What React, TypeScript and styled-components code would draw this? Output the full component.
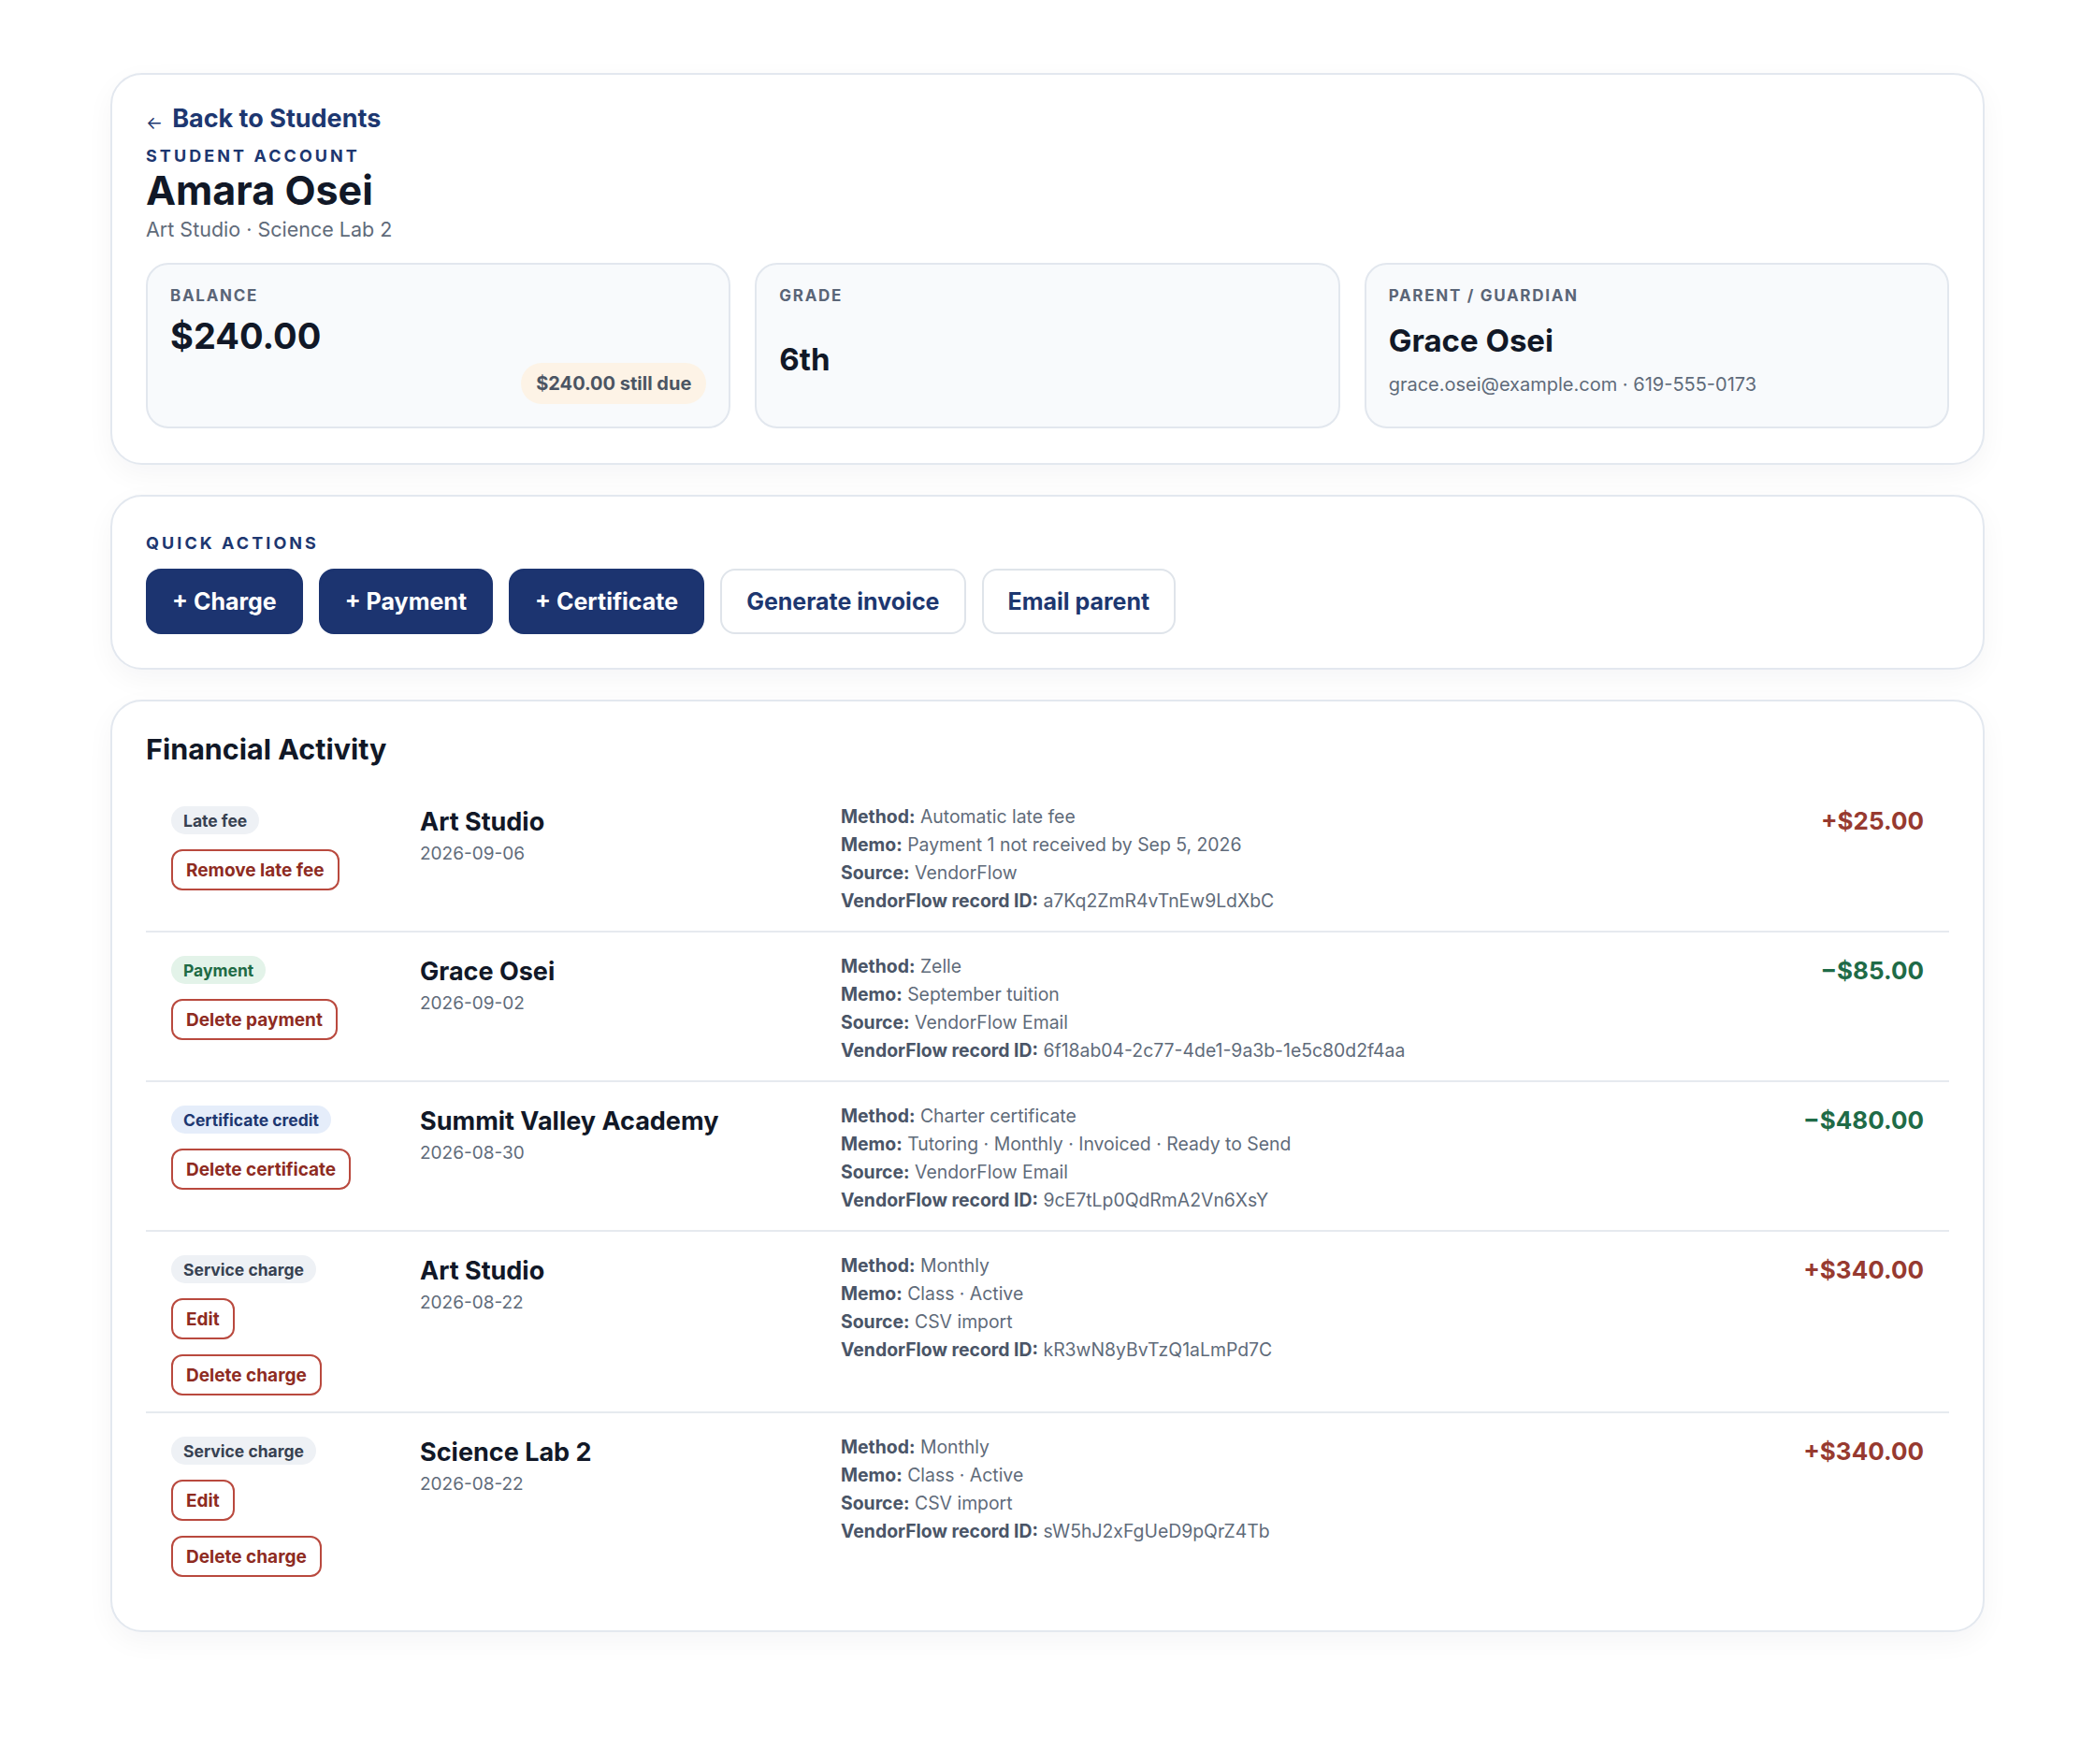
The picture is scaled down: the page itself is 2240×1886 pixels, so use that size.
import styled, { createGlobalStyle } from "styled-components"

const GlobalStyle = createGlobalStyle`
  * { box-sizing: border-box; }
  body {
    margin: 0;
    background: #ffffff;
    font-family: Inter, "Liberation Sans", Arial, sans-serif;
    color: #111827;
  }
`

const Page = styled.main`
  padding: 78px 118px 120px;
  display: flex;
  flex-direction: column;
  gap: 32px;
`

const Card = styled.section`
  background: #fff;
  border: 2px solid #e3e8ef;
  border-radius: 34px;
  padding: 30px 36px 37px;
  box-shadow: 0 10px 30px rgba(15, 23, 42, 0.045);
`

const BackLink = styled.a`
  display: flex;
  align-items: baseline;
  gap: 10px;
  color: #1d3770;
  font-size: 27px;
  font-weight: 700;
  line-height: 34px;
  text-decoration: none;
  cursor: pointer;

  span {
    font-size: 19px;
    font-weight: 400;
    position: relative;
    top: 2px;
  }
`

const Eyebrow = styled.div<{ $tone?: "navy" | "slate" }>`
  font-size: ${(p) => (p.$tone === "slate" ? "17px" : "18px")};
  line-height: 22px;
  font-weight: 700;
  letter-spacing: ${(p) => (p.$tone === "slate" ? "0.1em" : "0.17em")};
  text-transform: uppercase;
  color: ${(p) => (p.$tone === "slate" ? "#5a6577" : "#1d3770")};
`

const AccountLabel = styled(Eyebrow)`
  margin-top: 9px;
`

const StudentName = styled.h1`
  margin: 1px 0 0;
  font-size: 43px;
  line-height: 48px;
  font-weight: 700;
  color: #111827;
`

const Subtitle = styled.div`
  margin-top: 4px;
  font-size: 21.5px;
  line-height: 28px;
  color: #5f6b7a;
`

const StatGrid = styled.div`
  margin-top: 22px;
  display: grid;
  grid-template-columns: repeat(3, 1fr);
  gap: 26px;
`

const StatBox = styled.div`
  min-height: 176px;
  background: #f8fafc;
  border: 2px solid #e2e7ee;
  border-radius: 24px;
  padding: 22px 24px 24px;
  display: flex;
  flex-direction: column;
`

const StatBody = styled.div`
  flex: 1;
  padding-top: 8px;
  display: flex;
  flex-direction: column;
  justify-content: center;
`

const BigAmount = styled.div`
  font-size: 38px;
  line-height: 48px;
  font-weight: 700;
  color: #111827;
`

const StatValue = styled.div`
  font-size: 33px;
  line-height: 42px;
  font-weight: 700;
  color: #111827;
`

const StatNote = styled.div`
  margin-top: 12px;
  font-size: 20px;
  line-height: 28px;
  color: #5f6b7a;
`

const DuePill = styled.span`
  align-self: flex-end;
  margin-top: 5px;
  height: 44px;
  display: inline-flex;
  align-items: center;
  padding: 0 16px;
  border-radius: 999px;
  background: #fdf3e6;
  color: #4b5563;
  font-size: 20px;
  font-weight: 700;
`

const ActionsCard = styled(Card)`
  padding: 39px 36px 36px;
`

const ActionRow = styled.div`
  margin-top: 16px;
  display: flex;
  gap: 17px;
`

const ActionButton = styled.button<{ $primary?: boolean }>`
  height: 70px;
  padding: 0 26px;
  border-radius: 16px;
  font-family: inherit;
  font-size: 25px;
  font-weight: 700;
  cursor: pointer;
  border: 2px solid ${(p) => (p.$primary ? "#1c3470" : "#dfe4ea")};
  background: ${(p) => (p.$primary ? "#1c3470" : "#ffffff")};
  color: ${(p) => (p.$primary ? "#ffffff" : "#1d3770")};
`

const SectionTitle = styled.h2`
  margin: 0 0 17px;
  font-size: 30.5px;
  line-height: 38px;
  font-weight: 700;
  color: #111827;
`

const ActivityCard = styled(Card)`
  padding: 32px 36px 40px;
`

const ActivityRow = styled.div`
  display: grid;
  grid-template-columns: 266px 450px 1fr auto;
  padding: 21px 27px 17px;
  border-bottom: 2px solid #e6eaef;

  &:last-child {
    border-bottom: none;
  }
`

const TagColumn = styled.div`
  padding-top: 4px;
  display: flex;
  flex-direction: column;
  align-items: flex-start;
  gap: 16px;
`

type Tone = "neutral" | "green" | "blue"

const tagColors: Record<Tone, { bg: string; fg: string }> = {
  neutral: { bg: "#eef1f5", fg: "#374151" },
  green: { bg: "#e3f3e9", fg: "#1f6b45" },
  blue: { bg: "#e5edfa", fg: "#1d3770" },
}

const Tag = styled.span<{ $tone: Tone }>`
  height: 30px;
  display: inline-flex;
  align-items: center;
  padding: 0 13px;
  border-radius: 999px;
  font-size: 17.5px;
  font-weight: 700;
  background: ${(p) => tagColors[p.$tone].bg};
  color: ${(p) => tagColors[p.$tone].fg};
`

const DangerButton = styled.button`
  height: 44px;
  padding: 0 14px;
  border: 2px solid #b9493e;
  border-radius: 12px;
  background: #fff;
  color: #8e2b22;
  font-family: inherit;
  font-size: 19px;
  font-weight: 700;
  cursor: pointer;
`

const PartyColumn = styled.div`
  padding-top: 4px;
`

const PartyName = styled.div`
  font-size: 27px;
  line-height: 34px;
  font-weight: 700;
  color: #111827;
`

const PartyDate = styled.div`
  margin-top: 3px;
  font-size: 19px;
  line-height: 28px;
  color: #5f6b7a;
`

const Details = styled.div`
  font-size: 19.4px;
  line-height: 30px;
  color: #5f6b7a;

  b {
    font-weight: 700;
    color: #4a5567;
  }
`

const Amount = styled.div<{ $credit?: boolean }>`
  padding-top: 3px;
  font-size: 26px;
  line-height: 34px;
  font-weight: 700;
  text-align: right;
  color: ${(p) => (p.$credit ? "#1f6b47" : "#973a30")};
`

type Entry = {
  tag: string
  tone: Tone
  actions: string[]
  party: string
  date: string
  method: string
  memo: string
  source: string
  record: string
  amount: string
  credit?: boolean
}

const entries: Entry[] = [
  {
    tag: "Late fee",
    tone: "neutral",
    actions: ["Remove late fee"],
    party: "Art Studio",
    date: "2026-09-06",
    method: "Automatic late fee",
    memo: "Payment 1 not received by Sep 5, 2026",
    source: "VendorFlow",
    record: "a7Kq2ZmR4vTnEw9LdXbC",
    amount: "+$25.00",
  },
  {
    tag: "Payment",
    tone: "green",
    actions: ["Delete payment"],
    party: "Grace Osei",
    date: "2026-09-02",
    method: "Zelle",
    memo: "September tuition",
    source: "VendorFlow Email",
    record: "6f18ab04-2c77-4de1-9a3b-1e5c80d2f4aa",
    amount: "\u2212$85.00",
    credit: true,
  },
  {
    tag: "Certificate credit",
    tone: "blue",
    actions: ["Delete certificate"],
    party: "Summit Valley Academy",
    date: "2026-08-30",
    method: "Charter certificate",
    memo: "Tutoring · Monthly · Invoiced · Ready to Send",
    source: "VendorFlow Email",
    record: "9cE7tLp0QdRmA2Vn6XsY",
    amount: "\u2212$480.00",
    credit: true,
  },
  {
    tag: "Service charge",
    tone: "neutral",
    actions: ["Edit", "Delete charge"],
    party: "Art Studio",
    date: "2026-08-22",
    method: "Monthly",
    memo: "Class · Active",
    source: "CSV import",
    record: "kR3wN8yBvTzQ1aLmPd7C",
    amount: "+$340.00",
  },
  {
    tag: "Service charge",
    tone: "neutral",
    actions: ["Edit", "Delete charge"],
    party: "Science Lab 2",
    date: "2026-08-22",
    method: "Monthly",
    memo: "Class · Active",
    source: "CSV import",
    record: "sW5hJ2xFgUeD9pQrZ4Tb",
    amount: "+$340.00",
  },
]

export default function App() {
  return (
    <>
      <GlobalStyle />
      <Page>
        <Card>
          <BackLink>
            <span>←</span>Back to Students
          </BackLink>
          <AccountLabel>Student account</AccountLabel>
          <StudentName>Amara Osei</StudentName>
          <Subtitle>Art Studio · Science Lab 2</Subtitle>

          <StatGrid>
            <StatBox>
              <Eyebrow $tone="slate">Balance</Eyebrow>
              <StatBody>
                <BigAmount>$240.00</BigAmount>
                <DuePill>$240.00 still due</DuePill>
              </StatBody>
            </StatBox>
            <StatBox>
              <Eyebrow $tone="slate">Grade</Eyebrow>
              <StatBody>
                <StatValue>6th</StatValue>
              </StatBody>
            </StatBox>
            <StatBox>
              <Eyebrow $tone="slate">Parent / Guardian</Eyebrow>
              <StatBody>
                <StatValue>Grace Osei</StatValue>
                <StatNote>grace.osei@example.com · 619-555-0173</StatNote>
              </StatBody>
            </StatBox>
          </StatGrid>
        </Card>

        <ActionsCard>
          <Eyebrow>Quick actions</Eyebrow>
          <ActionRow>
            <ActionButton $primary>+ Charge</ActionButton>
            <ActionButton $primary>+ Payment</ActionButton>
            <ActionButton $primary>+ Certificate</ActionButton>
            <ActionButton>Generate invoice</ActionButton>
            <ActionButton>Email parent</ActionButton>
          </ActionRow>
        </ActionsCard>

        <ActivityCard>
          <SectionTitle>Financial Activity</SectionTitle>
          {entries.map((e, i) => (
            <ActivityRow key={i}>
              <TagColumn>
                <Tag $tone={e.tone}>{e.tag}</Tag>
                {e.actions.map((a) => (
                  <DangerButton key={a}>{a}</DangerButton>
                ))}
              </TagColumn>
              <PartyColumn>
                <PartyName>{e.party}</PartyName>
                <PartyDate>{e.date}</PartyDate>
              </PartyColumn>
              <Details>
                <div>
                  <b>Method:</b> {e.method}
                </div>
                <div>
                  <b>Memo:</b> {e.memo}
                </div>
                <div>
                  <b>Source:</b> {e.source}
                </div>
                <div>
                  <b>VendorFlow record ID:</b> {e.record}
                </div>
              </Details>
              <Amount $credit={e.credit}>{e.amount}</Amount>
            </ActivityRow>
          ))}
        </ActivityCard>
      </Page>
    </>
  )
}
